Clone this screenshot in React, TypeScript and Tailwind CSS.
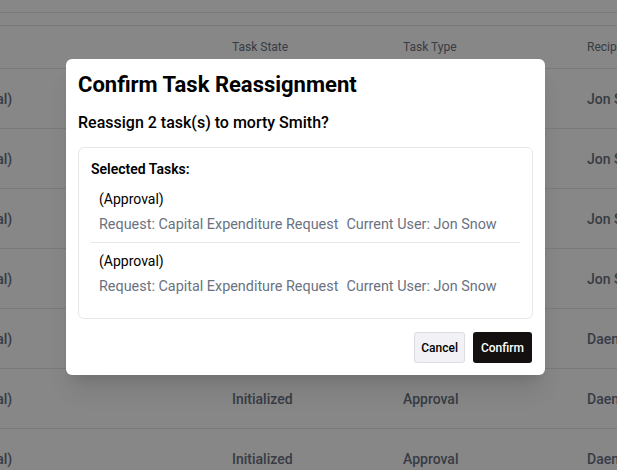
const rows = [
  { state: "Initialized", type: "Approval", recipient: "Jon Snow" },
  { state: "Initialized", type: "Approval", recipient: "Jon Snow" },
  { state: "Initialized", type: "Approval", recipient: "Jon Snow" },
  { state: "Initialized", type: "Approval", recipient: "Jon Snow" },
  { state: "Initialized", type: "Approval", recipient: "Daenerys Targaryen" },
  { state: "Initialized", type: "Approval", recipient: "Daenerys Targaryen" },
  { state: "Initialized", type: "Approval", recipient: "Daenerys Targaryen" },
];

const selected = [
  { type: "Approval", request: "Capital Expenditure Request", user: "Jon Snow" },
  { type: "Approval", request: "Capital Expenditure Request", user: "Jon Snow" },
];

export default function App() {
  return (
    <div
      className="relative w-[617px] h-[470px] overflow-hidden bg-white"
      style={{ fontFamily: "Roboto, 'Liberation Sans', sans-serif" }}
    >
      {/* table behind the dialog */}
      <div className="-ml-[53px] w-[900px]">
        <div className="h-[13px] border-b border-gray-200" />
        <div className="h-[13px] border-b border-gray-200" />
        <div className="flex items-center h-[43px] border-b border-gray-200 text-xs text-gray-500">
          <div className="w-[285px]" />
          <div className="w-[171px]">Task State</div>
          <div className="w-[184px]">Task Type</div>
          <div className="w-[200px]">Recipient</div>
        </div>
        {rows.map((row, i) => (
          <div
            key={i}
            className="flex items-center h-[60px] border-b border-gray-200 text-sm font-medium text-gray-500"
          >
            <div className="w-[285px]">(Approval)</div>
            <div className="w-[171px]">{row.state}</div>
            <div className="w-[184px]">{row.type}</div>
            <div className="w-[200px] whitespace-nowrap">{row.recipient}</div>
          </div>
        ))}
      </div>

      {/* overlay + dialog */}
      <div className="absolute inset-0 bg-black/[0.47] pt-[59px] pl-[66px]">
        <div className="w-[479px] bg-white rounded-md shadow-xl p-3">
          <h2 className="text-[22px] leading-7 font-bold text-black">Confirm Task Reassignment</h2>
          <p className="mt-3 text-base leading-6 font-medium text-black">
            Reassign 2 task(s) to morty Smith?
          </p>

          <div className="mt-3 border border-gray-200 rounded-md px-3 pt-[11px] pb-[14px]">
            <div className="mb-0.5 text-sm leading-5 font-semibold text-black">Selected Tasks:</div>
            <div>
              {selected.map((task, i) => (
                <div
                  key={i}
                  className={`px-2 pt-2 pb-[7px] ${i < selected.length - 1 ? "border-b border-gray-200" : ""}`}
                >
                  <div className="text-sm leading-5 text-black">({task.type})</div>
                  <div className="mt-[6px] flex gap-2 text-[14.4px] leading-5 text-gray-500">
                    <span>Request: {task.request}</span>
                    <span>Current User: {task.user}</span>
                  </div>
                </div>
              ))}
            </div>
          </div>

          <div className="mt-[13px] mr-px flex justify-end gap-2">
            <button className="h-[31px] px-[6px] rounded-[3px] border border-[#dcdce4] bg-[#f1f1f6] text-xs font-medium text-black">
              Cancel
            </button>
            <button className="h-[31px] px-2 rounded-[3px] bg-[#141010] text-xs font-medium text-white">
              Confirm
            </button>
          </div>
        </div>
      </div>
    </div>
  );
}
